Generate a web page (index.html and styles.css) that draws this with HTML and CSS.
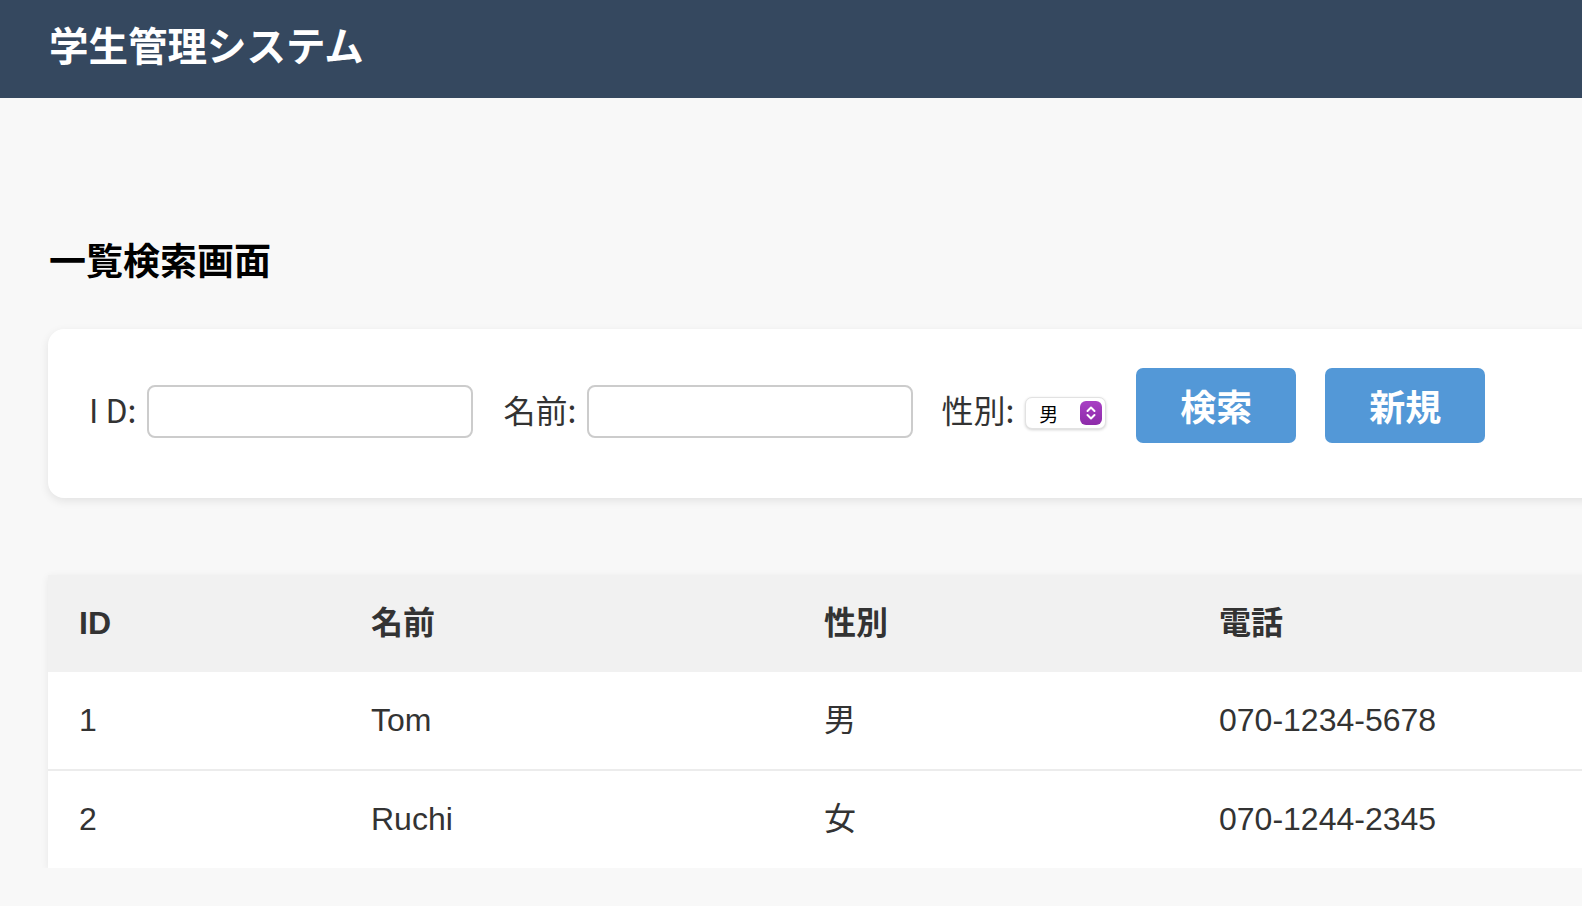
FILE: index.html
```html
<!DOCTYPE html>
<html lang="ja">
<head>
<meta charset="utf-8">
<title>学生管理システム</title>
<link rel="stylesheet" href="styles.css">
</head>
<body>
<header class="topbar">
  <h1 class="app-title">学生管理システム</h1>
</header>
<main class="content">
  <h2 class="page-title">一覧検索画面</h2>
  <form class="search-card">
    <label class="field-label" for="sid">I D:</label>
    <input class="text-input" id="sid" type="text">
    <label class="field-label" for="sname">名前:</label>
    <input class="text-input" id="sname" type="text">
    <label class="field-label label-gender" for="sgender">性別:</label>
    <span class="select-wrap">
      <select class="select" id="sgender">
        <option>男</option>
        <option>女</option>
      </select>
      <span class="select-icon">
        <svg width="22" height="24" viewBox="0 0 22 24">
          <path d="M7.5 10 L11 6.5 L14.5 10" fill="none" stroke="#fff" stroke-width="2" stroke-linecap="round" stroke-linejoin="round"/>
          <path d="M7.5 14 L11 17.5 L14.5 14" fill="none" stroke="#fff" stroke-width="2" stroke-linecap="round" stroke-linejoin="round"/>
        </svg>
      </span>
    </span>
    <button class="btn" type="button">検索</button>
    <button class="btn" type="button">新規</button>
  </form>
  <table class="student-table">
    <colgroup>
      <col class="col-id">
      <col class="col-name">
      <col class="col-gender">
      <col class="col-phone">
    </colgroup>
    <thead>
      <tr><th>ID</th><th>名前</th><th>性別</th><th>電話</th></tr>
    </thead>
    <tbody>
      <tr><td>1</td><td>Tom</td><td>男</td><td>070-1234-5678</td></tr>
      <tr><td>2</td><td>Ruchi</td><td>女</td><td>070-1244-2345</td></tr>
    </tbody>
  </table>
</main>
</body>
</html>
```

FILE: styles.css
```css
html, body {
  margin: 0;
  padding: 0;
}
body {
  background: #f8f8f8;
  font-family: "Noto Sans CJK JP", "Liberation Sans", sans-serif;
  color: #333;
  overflow-x: hidden;
}
.topbar {
  background: #35485f;
  height: 98px;
  display: flex;
  align-items: center;
  padding: 0 49px;
  width: 1700px;
  box-sizing: border-box;
}
.app-title {
  margin: 0;
  color: #fff;
  font-size: 39.5px;
  font-weight: 700;
  line-height: 1;
  margin-top: -10px;
}
.content {
  width: 1660px;
  padding: 0 0 0 48px;
}
.page-title {
  margin: 139px 0 48px 1px;
  font-size: 37px;
  line-height: 44px;
  font-weight: 700;
  color: #000;
}
.search-card {
  background: #fff;
  border-radius: 16px;
  box-shadow: 0 3px 10px rgba(0, 0, 0, 0.09);
  height: 169px;
  box-sizing: border-box;
  padding: 0 41px 14px 41px;
  display: flex;
  align-items: center;
}
.field-label {
  font-size: 32px;
  color: #333;
  margin-right: 11px;
  margin-left: 30px;
  white-space: nowrap;
  margin-top: 4px;
}
.field-label:first-child {
  margin-left: 0;
}
.label-gender {
  margin-left: 28px;
  margin-right: 11px;
}
.text-input {
  width: 326px;
  height: 53px;
  box-sizing: border-box;
  border: 2px solid #ccc;
  border-radius: 8px;
  background: #fff;
  margin-top: 10px;
  font-size: 28px;
  padding: 0 12px;
}
.select-wrap {
  position: relative;
  display: inline-block;
  width: 81px;
  height: 32px;
  margin-top: 13px;
}
.select {
  appearance: none;
  -webkit-appearance: none;
  width: 81px;
  height: 32px;
  border: 1px solid #e2e2e2;
  border-radius: 7px;
  background: #fff;
  box-shadow: 0 1px 3px rgba(0, 0, 0, 0.18);
  font-family: "Noto Sans CJK JP", sans-serif;
  font-size: 19px;
  color: #000;
  padding: 0 0 0 13px;
  box-sizing: border-box;
  outline: none;
}
.select-icon {
  position: absolute;
  right: 4px;
  top: 4px;
  width: 22px;
  height: 24px;
  border-radius: 6px;
  background: linear-gradient(#a840c4, #8d2ba9);
  pointer-events: none;
  display: flex;
}
.btn {
  width: 160px;
  height: 75px;
  margin-left: 30px;
  border: none;
  border-radius: 7px;
  background: #5398d7;
  color: #fff;
  font-family: "Noto Sans CJK JP", sans-serif;
  font-size: 36px;
  font-weight: 700;
  padding: 0;
  margin-top: -3px;
}
.btn + .btn {
  margin-left: 29px;
}
.student-table {
  margin-top: 77px;
  width: 1640px;
  table-layout: fixed;
  border-collapse: collapse;
  background: #fff;
  box-shadow: 0 2px 8px rgba(0, 0, 0, 0.07);
  font-family: "Liberation Sans", "Noto Sans CJK JP", sans-serif;
  font-size: 32px;
  color: #333;
}
.col-id { width: 292px; }
.col-name { width: 453px; }
.col-gender { width: 395px; }
.student-table th,
.student-table td {
  text-align: left;
  padding: 30px 31px;
  line-height: 37px;
}
.student-table th {
  background: #f1f1f1;
  font-weight: 700;
}
.student-table tbody tr + tr td {
  border-top: 2px solid #ececec;
}
```
